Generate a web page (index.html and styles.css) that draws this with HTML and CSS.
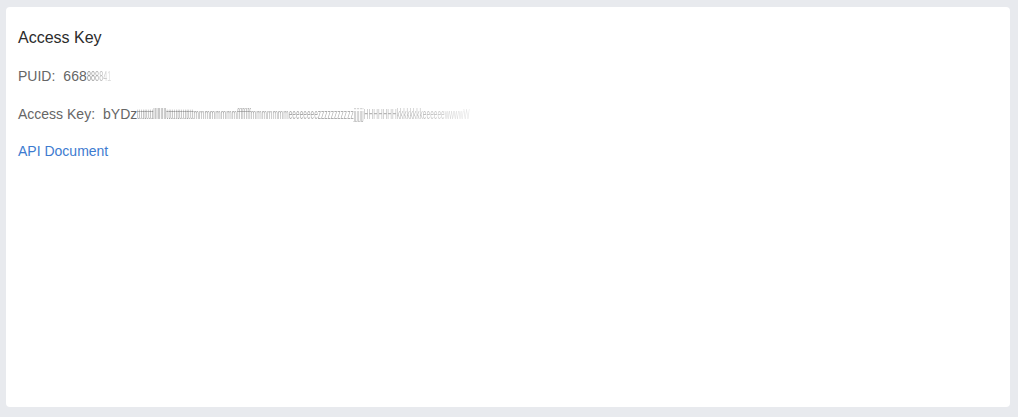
FILE: index.html
```html
<!DOCTYPE html>
<html lang="en">
<head>
<meta charset="utf-8">
<title>Access Key</title>
<link rel="stylesheet" href="styles.css">
</head>
<body>
<main class="card">
  <h2 class="title">Access Key</h2>
  <div class="row"><span class="label">PUID:</span><span class="value">668<span class="mask-box mask-box-short"><span class="mask mask-short">888841</span></span></span></div>
  <div class="row"><span class="label">Access Key:</span><span class="value">bYDz<span class="mask-box mask-box-long"><span class="mask mask-long">tttttttttllllllllltttttttttttttttmmmmmmmmffffffffmmmmmmmeeeeeeeezzzzzzzzzzzjjjjjjjHHHHHHHkkkkkkkkeeeeeewwwwW</span></span></span></div>
  <a class="link" href="#">API Document</a>
</main>
</body>
</html>
```
FILE: styles.css
```css
html, body {
  margin: 0;
  padding: 0;
}
body {
  background: #e8eaee;
  padding: 7px 8px 10px 6px;
  height: 417px;
  box-sizing: border-box;
  font-family: "Liberation Sans", Arial, sans-serif;
}
.card {
  background: #ffffff;
  border-radius: 4px;
  height: 400px;
  box-sizing: border-box;
  padding: 21px 12px;
  display: flex;
  flex-direction: column;
  align-items: flex-start;
  gap: 18px;
}
.title {
  margin: 0;
  font-size: 16px;
  font-weight: normal;
  line-height: 20px;
  color: #2b2b2b;
}
.row {
  font-size: 14px;
  line-height: 20px;
  color: #666666;
  white-space: nowrap;
  display: flex;
}
.label {
  margin-right: 8px;
}
.value {
  color: #666666;
  display: flex;
}
.mask-box {
  display: inline-block;
  white-space: nowrap;
}
.mask-box-short {
  width: 25px;
}
.mask-box-long {
  width: 334px;
}
.mask {
  display: inline-block;
  transform-origin: left center;
  color: transparent;
  -webkit-background-clip: text;
  background-clip: text;
  filter: blur(0.3px);
}
.mask-short {
  transform: scaleX(0.52);
  background-image: linear-gradient(to right, #8f8f8f, #bdbdbd 60%, #e6e6e6);
}
.mask-long {
  transform: scaleX(0.466);
  background-image: linear-gradient(to right, #999999, #aaaaaa 50%, #bbbbbb 85%, #e6e6e6);
}
.link {
  font-size: 14px;
  line-height: 20px;
  color: #3d7bd0;
  text-decoration: none;
  margin-top: -1px;
}
```
